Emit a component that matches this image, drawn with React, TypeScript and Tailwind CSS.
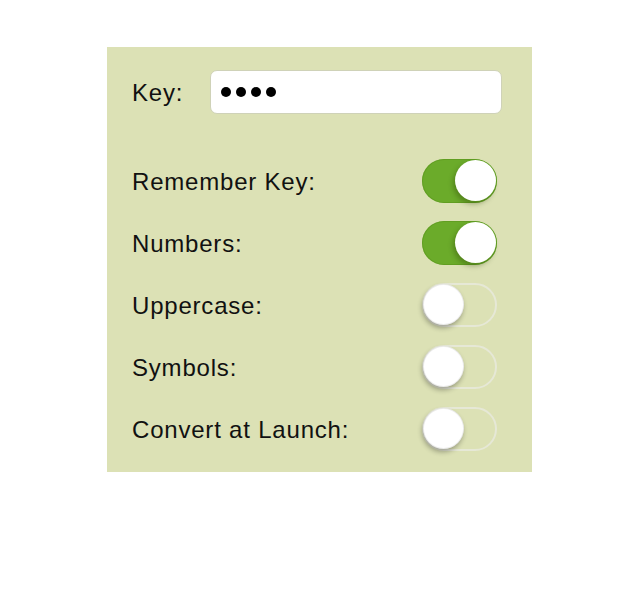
import { useState } from "react";

type ToggleProps = {
  checked: boolean;
  onChange: (v: boolean) => void;
};

const Toggle = ({ checked, onChange }: ToggleProps) => {
  return (
    <button
      type="button"
      onClick={() => onChange(!checked)}
      className={`relative flex items-center w-[75px] h-[44px] rounded-full shrink-0 ${
        checked
          ? "bg-[#6bab2a] shadow-[inset_0_0_0_1px_rgba(90,150,30,0.6)]"
          : "border-2 border-[#e6e8d6] bg-transparent"
      }`}
    >
      <span
        className={`absolute w-[41px] h-[41px] rounded-full bg-white ${
          checked
            ? "right-[1px] top-[1px] shadow-[-2px_3px_5px_rgba(40,60,0,0.35)]"
            : "left-[-1px] top-[-1px] shadow-[-1px_3px_5px_rgba(0,0,0,0.3),inset_0_0_0_1px_rgba(0,0,0,0.08)]"
        }`}
      />
    </button>
  );
};

const SettingRow = ({
  label,
  checked,
  onChange,
}: {
  label: string;
  checked: boolean;
  onChange: (v: boolean) => void;
}) => {
  return (
    <div className="flex items-center justify-between h-[62px] pr-[5px]">
      <span className="text-[24px] tracking-[0.8px] text-[#111] pt-[2px]">{label}</span>
      <Toggle checked={checked} onChange={onChange} />
    </div>
  );
};

export default function App() {
  const [settings, setSettings] = useState({
    remember: true,
    numbers: true,
    uppercase: false,
    symbols: false,
    convert: false,
  });

  const set = (key: keyof typeof settings) => (v: boolean) =>
    setSettings((prev) => ({ ...prev, [key]: v }));

  return (
    <div className="w-full h-[600px] bg-white pt-[47px] pl-[107px] font-['Liberation_Sans',Arial,sans-serif]">
      <div className="w-[425px] h-[425px] bg-[#dce1b5] pl-[25px] pr-[30px] pt-[23px] overflow-hidden">
        <div className="flex items-center h-[44px]">
          <span className="w-[78px] text-[24px] tracking-[0.8px] text-[#111] pt-[2px]">Key:</span>
          <div className="flex-1 h-[44px] bg-white rounded-[7px] border border-[#cfd2b8] flex items-center pl-[10px] gap-[5px]">
            <span className="w-[10px] h-[10px] rounded-full bg-black" />
            <span className="w-[10px] h-[10px] rounded-full bg-black" />
            <span className="w-[10px] h-[10px] rounded-full bg-black" />
            <span className="w-[10px] h-[10px] rounded-full bg-black" />
          </div>
        </div>
        <div className="mt-[36px] flex flex-col">
          <SettingRow label="Remember Key:" checked={settings.remember} onChange={set("remember")} />
          <SettingRow label="Numbers:" checked={settings.numbers} onChange={set("numbers")} />
          <SettingRow label="Uppercase:" checked={settings.uppercase} onChange={set("uppercase")} />
          <SettingRow label="Symbols:" checked={settings.symbols} onChange={set("symbols")} />
          <SettingRow label="Convert at Launch:" checked={settings.convert} onChange={set("convert")} />
        </div>
      </div>
    </div>
  );
}
